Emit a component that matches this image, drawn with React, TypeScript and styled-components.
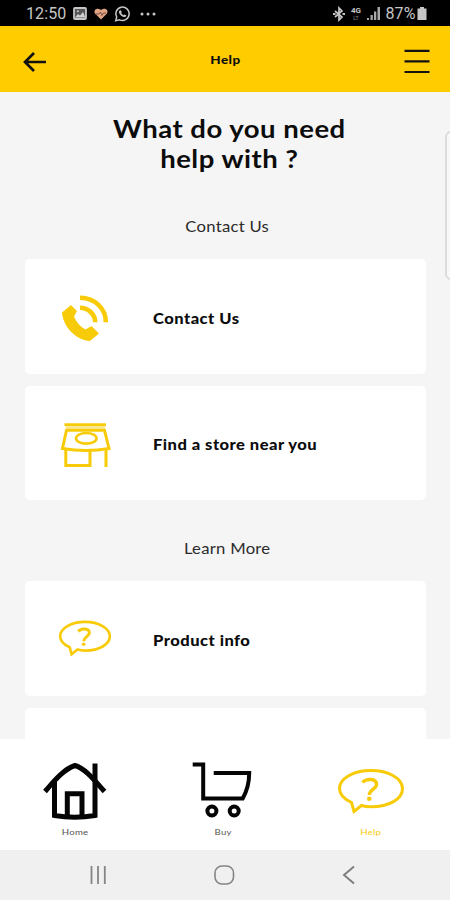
import React from 'react';
import styled, { createGlobalStyle } from 'styled-components';

const YELLOW = '#ffcc00';
const ICON_YELLOW = '#f8cb08';

const GlobalStyle = createGlobalStyle`
  * { box-sizing: border-box; }
  html, body { margin: 0; padding: 0; }
  body { font-family: Lato, 'Open Sans', sans-serif; color: #0c0c0c; }
  svg { display: block; overflow: visible; flex: none; }
`;

const Screen = styled.div`
  position: relative;
  width: 450px;
  height: 900px;
  overflow: hidden;
  display: flex;
  flex-direction: column;
  background: #f5f5f5;
`;

const StatusBar = styled.div`
  flex: none;
  height: 26px;
  padding: 1px 23px 0 26px;
  display: flex;
  align-items: center;
  justify-content: space-between;
  background: #000;
  color: #c6c6c6;
`;

const StatusGroup = styled.div<{ $gap: number }>`
  display: flex;
  align-items: center;
  gap: ${(p) => p.$gap}px;
`;

const StatusText = styled.span<{ $spacing: number }>`
  font: 400 16px/25px Roboto, sans-serif;
  letter-spacing: ${(p) => p.$spacing}px;
`;

const Network = styled.span`
  display: flex;
  flex-direction: column;
  align-items: center;
  width: 11px;
  font: 700 8px/8px Roboto, sans-serif;
  small {
    font-size: 5px;
    line-height: 6px;
    color: #666;
  }
`;

const Header = styled.header`
  flex: none;
  height: 66px;
  padding: 6px 20px 0 23px;
  display: grid;
  grid-template-columns: 26px 1fr 26px;
  align-items: center;
  background: ${YELLOW};
`;

const HeaderTitle = styled.h1`
  margin: 0;
  padding: 0 2px 4px 0;
  text-align: center;
  font-size: 12px;
  font-weight: 900;
  line-height: 16px;
  letter-spacing: 0.4px;
  transform: scaleX(1.12);
`;

const Content = styled.main`
  flex: 1;
  min-height: 0;
  overflow: hidden;
  padding: 21px 24px 0 25px;
  display: flex;
  flex-direction: column;
`;

const Question = styled.h2`
  flex: none;
  margin: 0 0 38px;
  padding-left: 7px;
  text-align: center;
  font-size: 25px;
  font-weight: 700;
  line-height: 30px;
  letter-spacing: 0.45px;
  transform: scaleX(1.1);
`;

const SectionTitle = styled.h3`
  flex: none;
  margin: 0;
  padding-left: 3px;
  height: 48px;
  text-align: center;
  font-size: 15px;
  font-weight: 400;
  line-height: 30px;
  letter-spacing: 0.25px;
  color: #2b2b2b;
  transform: scaleX(1.11);
`;

const CardList = styled.div`
  flex: none;
  display: flex;
  flex-direction: column;
  gap: 12px;
  margin-bottom: 33px;
`;

const Card = styled.button`
  flex: none;
  width: 401px;
  height: 114.5px;
  padding: 0;
  border: 0;
  border-radius: 5px;
  background: #fff;
  color: #0c0c0c;
  display: grid;
  grid-template-columns: 128px 1fr;
  align-items: center;
  text-align: left;
  font-family: inherit;
`;

const CardIcon = styled.span<{ $indent?: number }>`
  padding-left: ${(p) => p.$indent ?? 32}px;
`;

const CardLabel = styled.span`
  padding-top: 5px;
  font-size: 14.5px;
  font-weight: 900;
  line-height: 20px;
  letter-spacing: 0.42px;
  transform: scaleX(1.14);
  transform-origin: left center;
`;

const TabBar = styled.nav`
  flex: none;
  height: 111px;
  padding: 20px 3px 0 1px;
  display: grid;
  grid-template-columns: repeat(3, 148px);
  background: #fff;
`;

const Tab = styled.div<{ $active?: boolean }>`
  display: flex;
  flex-direction: column;
  align-items: center;
  color: ${(p) => (p.$active ? ICON_YELLOW : '#555')};
  svg { margin-bottom: 4px; }
`;

const TabLabel = styled.span`
  font-size: 8px;
  line-height: 11px;
  letter-spacing: 0.2px;
  transform: scaleX(1.2);
`;

const SystemBar = styled.div`
  flex: none;
  height: 50px;
  padding: 0 94px 0 88px;
  display: flex;
  align-items: center;
  justify-content: space-between;
  background: #f0f0f0;
`;

const EdgeHandle = styled.div`
  position: absolute;
  top: 131px;
  right: -8px;
  width: 13px;
  height: 149px;
  border: 2px solid #dcdcdc;
  border-radius: 6px;
  background: #f8f8f8;
`;

const PictureIcon = () => (
  <svg width="14" height="13" viewBox="0 0 14 13">
    <rect x="1" y="1" width="12" height="11" rx="1" fill="#555" stroke="#c6c6c6" strokeWidth="1.8" />
    <path d="M2 10.500l3-3.500 2 1.500L10 5l2.500 5.500z" fill="#d0d0d0" />
    <circle cx="4.800" cy="4.200" r="1" fill="#d0d0d0" />
  </svg>
);

const HeartIcon = () => (
  <svg width="14" height="12" viewBox="0 0 14 12">
    <path d="M7 11.500L1 5.500C-1 2 3-1 7 2c4-3 8 0 6 3.500z" fill="#e0a484" />
    <path d="M2 6h3l1.500-2L8 7.500 9.500 5H12" fill="none" stroke="#795044" strokeWidth="1" />
  </svg>
);

const WhatsAppIcon = () => (
  <svg width="16" height="16" viewBox="0.500 0 16 16">
    <path d="M1.200 14.800l1-3.600A6.700 6.700 0 1 1 5 13.800z" fill="none" stroke="#c6c6c6" strokeWidth="1.500" />
    <path d="M5 4.500l1.400-.3.900 2-.7.900c.6 1 1.300 1.700 2.400 2.200l.8-.9 2 .9c0 1.500-1.200 2-2.500 1.700C7 10.400 4.500 8 4.400 6z" fill="#c6c6c6" />
  </svg>
);

const MoreDots = () => (
  <svg width="18" height="4" viewBox="-2 0 18 4" fill="#c6c6c6">
    <circle cx="2" cy="2" r="1.500" />
    <circle cx="8" cy="2" r="1.500" />
    <circle cx="14" cy="2" r="1.500" />
  </svg>
);

const BluetoothIcon = () => (
  <svg width="12" height="14" viewBox="0 0 12 14" fill="none" stroke="#c6c6c6" strokeWidth="1.700">
    <path d="M2 4l7 6-3 3V1l3 3-7 6" />
    <path d="M0 7h2.500M9.500 7h2.500" strokeWidth="2" />
  </svg>
);

const SignalIcon = () => (
  <svg width="13" height="13" viewBox="0 0 13 13" fill="#a8a8a8">
    <path d="M0 11h2v2H0zM3.500 8h2.300v5h-2.300zM7 4.500h2.300V13H7zM10.500 0h2.500v13h-2.500z" />
  </svg>
);

const BatteryIcon = () => (
  <svg width="10" height="13" viewBox="0 0 10 13">
    <path d="M3 0h4v1.500h2.500V13H.5V1.500H3z" fill="#c6c6c6" />
  </svg>
);

const BackArrow = () => (
  <svg width="24" height="20" viewBox="23 52 24 20" fill="none" stroke="#111" strokeWidth="2.700">
    <path d="M46 62H25M34 53l-9 9 9 9" />
  </svg>
);

const MenuIcon = () => (
  <svg width="26" height="26" viewBox="404.500 49 26 26" fill="none" stroke="#111" strokeWidth="2.200">
    <path d="M405 50.800h25M405 61.400h25M405 72h25" />
  </svg>
);

const PhoneIcon = () => (
  <svg width="54" height="54" viewBox="57 289 54 54">
    <path
      d="M71 305L62 312.500C63 326 75 340 90 341L99 333.500L91.500 326L85.500 329.500C80 326.500 76 321.500 74 316.500L77 311Z"
      fill={ICON_YELLOW}
    />
    <path
      d="M80 297.700A25.500 24 0 0 1 105.800 322.300M80 307.700A15.500 15 0 0 1 95.300 322.300"
      fill="none"
      stroke={ICON_YELLOW}
      strokeWidth="4.600"
    />
  </svg>
);

const StoreIcon = () => (
  <svg width="54" height="54" viewBox="57 416 54 54" fill="none" stroke={ICON_YELLOW} strokeWidth="3">
    <path d="M64.500 424.700H106" />
    <path d="M66 427.500H105" stroke="#fbe58c" strokeWidth="2.500" />
    <path d="M66.500 430.200H104.500L109 448.500Q86 452.500 62.500 448.500Z" />
    <ellipse cx="86.300" cy="438.300" rx="10.300" ry="5.300" strokeWidth="2.600" />
    <path d="M65.800 449V465.500H90V450M106 449V467" />
  </svg>
);

const HelpBubble = ({ width, height, stroke }: { width: number; height: number; stroke: number }) => (
  <svg width={width} height={height} viewBox="0 0 66 45" fill="none" stroke={ICON_YELLOW} strokeWidth={stroke}>
    <path d="M13.500 33.500C6 30 1.500 25 1.500 19.500C1.500 9.500 15.500 1.500 33 1.500S64.500 9.500 64.500 19.800S51 37.800 33 37.800C29.500 37.800 26 37.300 23.500 36.500L16 42.500Z" />
    <path d="M24.500 13.500C28 9.500 38.500 9 38.500 15.500C38.500 20 31.500 20.500 31.300 26" strokeWidth={stroke + 0.4} />
    <circle cx="31.300" cy="29.800" r="2.300" fill={ICON_YELLOW} stroke="none" />
  </svg>
);

const HomeIcon = () => (
  <svg width="64" height="64" viewBox="42.500 759 64 64" fill="none" stroke="#050505" strokeWidth="5">
    <path d="M44.500 791.500C52 783 63 769 74.500 765.500C86 769 96 783 104 791.500" />
    <path d="M54 781V815.500Q74 819 94.500 815.500V763.500" />
    <path d="M66.800 816V793.800H81.500V816" />
  </svg>
);

const CartIcon = () => (
  <svg width="60" height="64" viewBox="192.300 759 60 64" fill="none" stroke="#050505" strokeWidth="4">
    <path d="M192 764.500H202.500V798.500H242Q248.500 787 248.500 773H213" />
    <circle cx="211.200" cy="811" r="4.500" />
    <circle cx="233.500" cy="811" r="4.500" />
  </svg>
);

const RecentsIcon = () => (
  <svg width="20" height="20" viewBox="0 0 20 20" stroke="#858585" strokeWidth="1.800">
    <path d="M3.500 1v18M10 1v18M16.800 1v18" />
  </svg>
);

const HomeButtonIcon = () => (
  <svg width="22" height="20" viewBox="0.500 0 22 20">
    <rect x="1.500" y="1" width="18.500" height="18" rx="7" fill="none" stroke="#858585" strokeWidth="1.600" />
  </svg>
);

const BackIcon = () => (
  <svg width="14" height="20" viewBox="0 0 14 20">
    <path d="M12 1.500L2 10l10 8.500" fill="none" stroke="#7c7c7c" strokeWidth="1.900" />
  </svg>
);

export default function App() {
  return (
    <>
      <GlobalStyle />
      <Screen>
        <StatusBar>
          <StatusGroup $gap={7}>
            <StatusText $spacing={0.1}>12:50</StatusText>
            <PictureIcon />
            <HeartIcon />
            <WhatsAppIcon />
            <MoreDots />
          </StatusGroup>
          <StatusGroup $gap={5.5}>
            <BluetoothIcon />
            <Network>
              4G<small>LT</small>
            </Network>
            <SignalIcon />
            <StatusGroup $gap={1.5}>
              <StatusText $spacing={0.1}>87%</StatusText>
              <BatteryIcon />
            </StatusGroup>
          </StatusGroup>
        </StatusBar>

        <Header>
          <BackArrow />
          <HeaderTitle>Help</HeaderTitle>
          <MenuIcon />
        </Header>

        <Content>
          <Question>
            What do you need
            <br />
            help with ?
          </Question>
          <SectionTitle>Contact Us</SectionTitle>
          <CardList>
            <Card>
              <CardIcon><PhoneIcon /></CardIcon>
              <CardLabel>Contact Us</CardLabel>
            </Card>
            <Card>
              <CardIcon><StoreIcon /></CardIcon>
              <CardLabel>Find a store near you</CardLabel>
            </Card>
          </CardList>
          <SectionTitle>Learn More</SectionTitle>
          <CardList>
            <Card>
              <CardIcon $indent={34}>
                <HelpBubble width={52} height={37} stroke={3.4} />
              </CardIcon>
              <CardLabel>Product info</CardLabel>
            </Card>
            <Card />
          </CardList>
        </Content>

        <TabBar>
          <Tab>
            <HomeIcon />
            <TabLabel>Home</TabLabel>
          </Tab>
          <Tab>
            <CartIcon />
            <TabLabel>Buy</TabLabel>
          </Tab>
          <Tab $active>
            <svg width="66" height="64" viewBox="0 -10 66 64">
              <HelpBubble width={66} height={45} stroke={3} />
            </svg>
            <TabLabel>Help</TabLabel>
          </Tab>
        </TabBar>

        <SystemBar>
          <RecentsIcon />
          <HomeButtonIcon />
          <BackIcon />
        </SystemBar>
        <EdgeHandle />
      </Screen>
    </>
  );
}
